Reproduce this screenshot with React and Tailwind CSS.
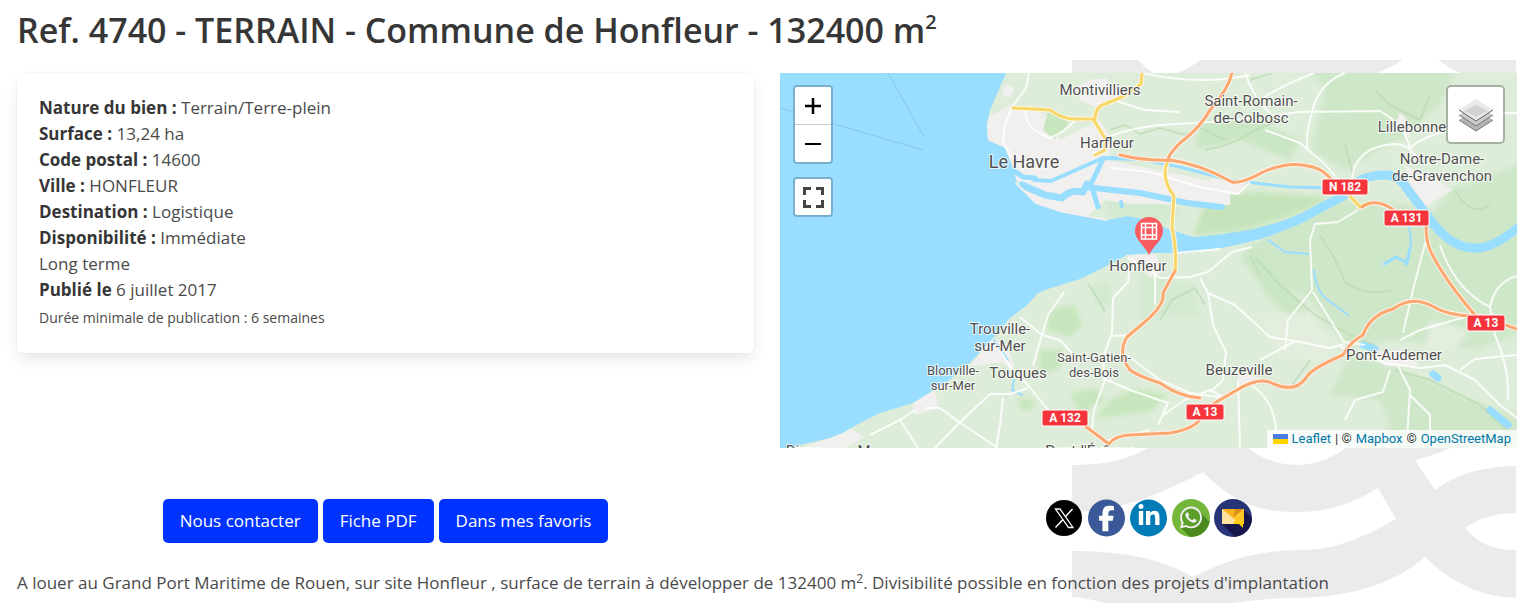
import { FaFacebookF, FaLinkedinIn, FaWhatsapp } from "react-icons/fa6";

const DETAILS = [
  ["Nature du bien :", "Terrain/Terre-plein"],
  ["Surface :", "13,24 ha"],
  ["Code postal :", "14600"],
  ["Ville :", "HONFLEUR"],
  ["Destination :", "Logistique"],
  ["Disponibilité :", "Immédiate"],
  ["", "Long terme"],
  ["Publié le", "6 juillet 2017"],
];

const WHITE_ROADS = [
  "M1029 73 L1026 88 L1012 107 L1005 125 L1003 142 L1012 158",
  "M1025 110 Q1026 130 1050 138 Q1068 130 1075 120",
  "M1105 138 Q1130 128 1160 125 L1210 122 L1255 118 L1300 112 L1380 111 Q1405 125 1410 148",
  "M1142 73 Q1200 86 1250 75",
  "M1113 100 L1145 110 L1180 112",
  "M1345 73 Q1322 82 1314 105 Q1302 145 1310 152 Q1330 165 1344 190",
  "M1314 73 Q1280 86 1260 100",
  "M1265 130 L1300 143 L1312 153",
  "M1245 73 Q1255 100 1270 113",
  "M1352 178 Q1356 147 1393 144 Q1410 144 1418 160",
  "M1410 148 Q1420 138 1450 130 M1500 113 L1517 113",
  "M1110 168 L1150 172 L1200 187 L1238 194 L1250 182",
  "M1358 210 L1338 222 L1315 224 L1310 240 L1312 290 L1288 320 L1285 350",
  "M1128 258 L1150 270 L1160 278 L1190 277 L1208 272 L1232 252 L1252 247",
  "M1175 253 L1220 249",
  "M1155 275 L1155 305",
  "M1200 278 L1208 293 L1235 305 L1270 337 L1295 341 L1330 348 L1345 344",
  "M1208 293 L1213 325 L1226 352 L1223 380 L1210 392",
  "M1130 263 L1128 282 L1113 298 L1112 333 L1103 358 L1105 380 L1094 410 L1092 428",
  "M1112 336 L1130 335",
  "M1020 317 L1042 335 L1060 340 L1072 353",
  "M1064 292 L1048 315 L1042 335 L1033 365",
  "M1120 350 L1160 380 L1190 393 L1225 398",
  "M1103 378 L1130 390 L1168 403 L1158 425",
  "M1163 415 L1185 400 L1210 390 L1225 398 L1240 388",
  "M1000 350 L1012 370 L1028 385 L1048 410",
  "M935 448 L958 424 L990 394 L1010 394 L1028 388",
  "M925 408 L940 408 L962 424 L998 448",
  "M1003 398 L1000 425 L996 448",
  "M1108 440 L1150 430",
  "M1238 380 L1240 448",
  "M1250 384 Q1278 402 1276 440",
  "M1260 360 L1295 341",
  "M1313 292 L1344 342 L1365 345",
  "M1340 347 L1385 363 L1420 368 L1445 365 L1475 380 L1500 405 L1517 418",
  "M1398 366 L1410 390 L1407 440 M1410 395 L1430 415 L1430 448",
  "M1390 370 L1383 392 L1355 400 L1345 420",
  "M1460 370 L1475 359 L1517 355",
  "M1400 340 L1420 330 L1465 317",
  "M1426 240 L1413 290 L1403 333",
  "M1440 245 Q1455 290 1490 307 L1495 335 Q1510 370 1508 400",
  "M1490 307 Q1495 282 1517 276",
  "M870 435 L900 420 L915 410 M900 420 L918 448",
];

const ORANGE_ROADS = [
  "M1232 73 Q1228 90 1210 110 Q1200 128 1180 143 Q1168 155 1168 160",
  "M1120 155 Q1145 161 1170 160 Q1200 164 1232 182 Q1242 184 1263 172 Q1290 160 1313 167 Q1322 169 1332 180",
  "M1362 207 Q1376 197 1395 211",
  "M1426 225 Q1426 244 1432 254 Q1445 280 1474 314",
  "M1175 271 L1163 293 Q1165 304 1147 320 L1127 337 Q1117 353 1130 370 Q1140 377 1160 383 Q1180 397 1200 398",
  "M1213 404 L1237 390 Q1260 376 1274 384 Q1295 393 1306 378 Q1310 369 1343 355 Q1350 342 1363 335 Q1370 315 1393 309 Q1412 295 1432 306 Q1450 317 1480 316 L1517 329",
  "M1085 426 L1109 444 Q1114 436 1130 435 L1170 433 Q1200 428 1203 413",
];

const YELLOW_ROADS = [
  "M1013 108 L1034 109 L1050 110 Q1062 119 1075 119 L1093 119 L1105 138 L1105 150 L1095 155",
  "M1142 73 L1141 84 L1122 97 L1105 104 Q1095 107 1095 119",
  "M1168 160 Q1160 178 1174 196 L1172 227 Q1177 250 1175 271",
  "M1350 196 L1360 207 L1370 203",
];

const PLACES = [
  { x: 1100, y: 95, size: 15, lines: ["Montivilliers"] },
  { x: 1107, y: 148, size: 15, lines: ["Harfleur"] },
  { x: 1024, y: 168, size: 18, lines: ["Le Havre"] },
  { x: 1251, y: 106, size: 15, lines: ["Saint-Romain-", "de-Colbosc"] },
  { x: 1412, y: 132, size: 15, lines: ["Lillebonne"] },
  { x: 1442, y: 164, size: 15, lines: ["Notre-Dame-", "de-Gravenchon"] },
  { x: 1138, y: 271, size: 15, lines: ["Honfleur"] },
  { x: 1000, y: 334, size: 15, lines: ["Trouville-", "sur-Mer"] },
  { x: 1018, y: 378, size: 15, lines: ["Touques"] },
  { x: 953, y: 375, size: 13, lines: ["Blonville-", "sur-Mer"] },
  { x: 1094, y: 362, size: 13, lines: ["Saint-Gatien-", "des-Bois"] },
  { x: 1239, y: 375, size: 15, lines: ["Beuzeville"] },
  { x: 1394, y: 360, size: 15, lines: ["Pont-Audemer"] },
  { x: 804, y: 456, size: 15, lines: ["Dives"] },
  { x: 864, y: 456, size: 15, lines: ["M"] },
  { x: 1090, y: 456, size: 15, lines: ["Pont-l'Évêque"] },
];

const SHIELDS = [
  { x: 1322, y: 179, w: 46, label: "N 182" },
  { x: 1384, y: 210, w: 45, label: "A 131" },
  { x: 1467, y: 315, w: 38, label: "A 13" },
  { x: 1186, y: 404, w: 38, label: "A 13" },
  { x: 1042, y: 410, w: 46, label: "A 132" },
];

function MapDrawing() {
  return (
    <svg
      className="block h-full w-full"
      viewBox="780 73 737 375"
      preserveAspectRatio="xMidYMid slice"
      role="img"
      aria-label="Carte de Honfleur"
    >
      <defs>
        <filter id="soft" x="-20%" y="-20%" width="140%" height="140%">
          <feGaussianBlur stdDeviation="2.5" />
        </filter>
        <clipPath id="land-clip">
          <path d="M1006 73 L990 110 L987 125 L988 140 L1005 148 L1012 165 L1017 183 L1035 203 L1060 211 L1087 217 L1107 220 L1127 216 L1145 219 L1163 227 L1193 237 L1215 236 L1260 230 L1300 214 L1330 200 L1330 208 L1300 222 L1260 241 L1220 248 L1187 253 L1153 253 L1127 255 L1103 268 L1080 279 L1044 291 L1027 305 L1010 318 L993 338 L970 363 L947 382 L913 403 L880 413 L860 423 L843 433 L830 438 L787 448 L1517 448 L1517 73 Z" />
        </clipPath>
      </defs>
      <rect x="780" y="73" width="737" height="375" fill="#99ddff" />
      <g fill="none" stroke="#86c6e9">
        <path d="M780 108 L923 150" />
        <path d="M888 73 L924 137" />
      </g>

      <path
        fill="#deedd9"
        d="M1006 73 L990 110 L987 125 L988 140 L1005 148 L1012 165 L1017 183 L1035 203 L1060 211 L1087 217 L1107 220 L1127 216 L1145 219 L1163 227 L1193 237 Q1260 232 1300 214 L1350 190 L1517 190 L1517 73 Z"
      />
      <path
        fill="#deedd9"
        d="M787 448 L830 438 L843 433 L860 423 L880 413 L913 403 L947 382 L970 363 L993 338 L1010 318 L1027 305 L1038 293 L1048 289 L1080 279 L1103 268 L1127 255 L1153 253 L1187 253 L1220 248 Q1270 240 1310 220 L1350 190 L1517 180 L1517 448 Z"
      />

      <g clipPath="url(#land-clip)">
        <g filter="url(#soft)">
          <path fill="#cfe7c9" d="M1265 235 L1340 200 L1420 205 L1470 240 L1530 225 L1530 330 L1475 350 L1400 340 L1345 345 L1310 300 L1275 280 L1240 262 L1250 244 Z" />
          <path fill="#cfe7c9" d="M1300 60 L1460 60 L1440 105 L1400 140 L1345 170 L1310 150 L1325 90 Z" />
          <path fill="#cfe7c9" d="M1432 215 L1450 190 L1530 160 L1530 225 L1470 245 Z" />
          <path fill="#cfe7c9" d="M1330 395 L1350 355 L1390 365 L1440 385 L1530 425 L1530 460 L1400 460 L1380 400 Z" />
          <path fill="#c6e4bb" d="M1208 196 L1260 192 L1330 197 L1300 213 L1250 229 L1193 236 Z" />
          <path fill="#d3ead0" d="M1105 200 L1150 198 L1185 210 L1165 225 L1110 218 Z" />
          <path fill="#c7e6bd" d="M1050 310 L1075 305 L1082 325 L1070 337 L1047 330 Z" />
          <path fill="#c7e6bd" d="M1110 400 L1135 388 L1168 395 L1150 412 L1095 418 Z" />
          <path fill="#c7e6bd" d="M1070 393 L1095 388 L1105 400 L1080 415 Z" />
          <path fill="#c7e6bd" d="M1040 350 L1062 350 L1060 368 L1040 375 Z" />
          <path fill="#c7e6bd" d="M1018 398 L1035 400 L1030 412 L1018 408 Z" />
          <path fill="#d3ead0" d="M1090 285 L1110 280 L1112 305 L1098 310 Z M1140 272 L1195 285 L1200 318 L1165 315 L1140 330 Z" />
          <path fill="#cbe6c5" d="M1200 122 L1250 118 L1300 140 L1290 160 L1240 140 L1195 150 Z" />
          <path fill="#cbe6c5" d="M1240 255 L1258 245 L1290 290 L1330 330 L1320 340 L1270 300 Z" />
          <path fill="#e3eede" d="M1260 320 L1310 310 L1335 340 L1330 365 L1280 355 Z M1430 320 L1470 330 L1455 350 L1425 350 Z" />
        </g>
        <path fill="#f2f0ee" d="M990 116 L1012 104 L1040 112 L1050 118 L1060 140 L1100 120 L1112 140 L1108 160 L1230 185 L1230 205 L1130 204 L1105 200 L1087 217 L1035 203 L1017 180 L1003 148 L987 140 L985 122 Z" />
        <path fill="#c7e6bd" d="M1048 112 L1062 113 L1068 125 L1054 139 L1043 130 Z" />
        <path fill="#f2f0ee" d="M1075 88 L1090 80 L1105 78 L1116 90 L1122 98 L1095 107 L1080 100 Z M1005 85 L1015 88 L1010 97 L1002 96 Z M1210 178 L1245 182 L1238 194 L1210 190 Z" />
        <path fill="#f2f0ee" d="M1405 166 L1434 178 L1452 190 L1425 207 L1410 184 Z M1400 113 Q1412 120 1410 138 L1395 125 Z" />
        <path fill="#f2f0ee" d="M1125 255 L1155 254 L1163 272 L1150 277 Z M993 338 L1007 345 L1015 370 L1000 362 L970 366 Z M913 403 L935 390 L938 408 L915 415 Z M800 448 L830 438 L850 428 L865 437 L845 448 Z" />
        <path fill="#f2f0ee" d="M1370 352 L1400 350 L1420 366 L1385 366 Z M1236 370 L1260 378 L1240 386 Z" />
      </g>

      <g fill="none" stroke="#b9d9b2" strokeOpacity="0.65" strokeWidth="2" strokeLinejoin="round">
        <path d="M1110 130 L1125 125 L1140 134 L1160 128 L1185 135 L1200 128 L1225 140" />
        <path d="M1205 150 Q1235 145 1255 130 L1285 118 M1250 80 L1272 73" />
        <path d="M1345 145 L1353 175 M1375 90 L1390 105 L1420 120 L1430 95" />
        <path d="M1255 257 L1280 285 L1315 315 L1350 335 L1375 345" />
        <path d="M1320 235 Q1338 262 1345 282 Q1365 297 1393 290" />
        <path d="M1160 320 L1172 300 L1195 288 L1205 305" />
        <path d="M1088 284 L1100 302 L1105 312 M1250 255 L1260 275" />
        <path d="M1290 388 L1310 360 M1395 370 L1430 380 L1480 405 L1517 440" />
        <path d="M1455 190 Q1470 218 1490 205" />
      </g>

      <g fill="none" stroke="#99ddff" strokeLinecap="round" strokeLinejoin="round">
        <path strokeWidth="9" d="M1190 246 Q1260 238 1300 219 L1345 195 Q1358 174 1387 175 Q1400 176 1408 190 L1427 215 Q1450 250 1478 248 Q1496 247 1522 224" />
        <path strokeWidth="4" d="M1034 180 L1051 181 L1103 158 L1140 159" />
        <path strokeWidth="3" d="M1138 159 L1180 167 L1230 180 L1290 187 L1340 188" />
        <path strokeWidth="6" d="M1085 187 L1140 193 L1187 203 L1222 207" />
        <path strokeWidth="5" d="M1103 159 L1091 184 L1098 207" />
        <path strokeWidth="7" d="M1022 185 L1045 195 L1062 198 Q1070 189 1083 192 L1087 184" />
        <path strokeWidth="5" d="M1010 168 L1023 177 L1035 178" />
        <path strokeWidth="4" d="M1121 202 L1122 206" />
        <path strokeWidth="2" d="M1268 240 L1285 252 L1310 254 M1314 270 Q1315 288 1325 298 L1348 315 M1408 225 Q1415 245 1405 265" />
        <path strokeWidth="3" d="M1384 264 L1396 257 L1407 263 L1410 248" />
        <path strokeWidth="7" d="M1363 345 L1375 349 M1433 374 L1438 378 M1490 410 L1508 425" />
        <path strokeWidth="2" d="M994 340 L1008 360 M1014 380 L1012 390 L1022 395" />
      </g>
      <path fill="none" stroke="#f2f0ee" strokeWidth="2" d="M1016 183 L1036 203 L1060 211 L1107 220" />

      <path fill="none" stroke="#fff" strokeWidth="2" strokeLinejoin="round" strokeOpacity="0.85" d={WHITE_ROADS.join(" ")} />
      <g fill="none" strokeLinecap="round" strokeLinejoin="round">
        <path stroke="#fdf6e4" strokeWidth="5" d={YELLOW_ROADS.join(" ")} />
        <path stroke="#fdf3ea" strokeWidth="5" d={ORANGE_ROADS.join(" ")} />
        <path stroke="#f6d768" strokeWidth="3" d={YELLOW_ROADS.join(" ")} />
        <path stroke="#fba770" strokeWidth="3" d={ORANGE_ROADS.join(" ")} />
      </g>

      <g
        fill="#50504f"
        stroke="#fff"
        strokeOpacity="0.8"
        strokeWidth="2"
        paintOrder="stroke"
        textAnchor="middle"
        className="font-['Roboto','Liberation_Sans',sans-serif]"
      >
        {PLACES.map((place) =>
          place.lines.map((line, i) => (
            <text key={line + place.y} x={place.x} y={place.y + i * (place.size + 2)} fontSize={place.size}>
              {line}
            </text>
          )),
        )}
      </g>

      {SHIELDS.map((s) => (
        <g key={s.label + s.x}>
          <rect x={s.x} y={s.y} width={s.w} height="16" rx="2" fill="#f5343b" stroke="#fff" strokeWidth="1" />
          <text
            x={s.x + s.w / 2}
            y={s.y + 12}
            fontSize="12"
            fontWeight="700"
            fill="#fff"
            textAnchor="middle"
            className="font-['Roboto','Liberation_Sans',sans-serif]"
          >
            {s.label}
          </text>
        </g>
      ))}

      <path fill="#fb5c60" d="M1149 255 C1145 246 1135 240 1135 231 A14 14 0 0 1 1163 231 C1163 240 1153 246 1149 255 Z" />
      <path
        fill="none"
        stroke="#fff"
        strokeWidth="1.5"
        d="M1141.500 223.500 H1156.500 V239 H1141.500 Z M1145.500 223 V239 M1152.500 223 V239 M1141 227.500 H1157 M1141 235 H1157"
      />
    </svg>
  );
}

function Waves() {
  return (
    <svg
      className="pointer-events-none absolute top-[60px] right-2 -z-10 h-[543px] w-[444px]"
      viewBox="1072 60 444 543"
      aria-hidden="true"
    >
      <rect x="1072" y="60" width="444" height="543" fill="#ebebeb" />
      <g fill="#fff">
        <path d="M1138 60 Q1145 68 1153 73 H1177 Q1190 68 1200 60 Z" />
        <path d="M1403 60 Q1392 67 1377 73 H1460 Q1448 67 1438 60 Z" />
        <path d="M1072 440 V465 C1104 465 1128 460 1152 446 V440 Z" />
        <path d="M1246 446 Q1268 465 1297 465 Q1326 464 1348 446 Z" />
        <path d="M1415 460 Q1436 455 1455 446 H1516 V466 C1484 466 1456 474 1435 490 Z" />
        <path d="M1072 512 C1124 511 1164 492 1203 472 C1234 504 1262 512 1297 512 C1330 512 1355 502 1378 488 L1396 519 C1344 548 1324 550 1297 550 C1250 551 1218 564 1193 577 C1160 557 1116 551 1072 551 Z" />
        <path d="M1465 528 Q1486 513 1516 513 V550 Q1482 550 1465 528 Z" />
        <path d="M1425 557 C1394 584 1350 597 1297 598 Q1262 598 1233 603 H1516 V598 C1476 596 1450 581 1425 557 Z" />
        <path d="M1072 597 Q1088 598 1104 603 H1072 Z" />
      </g>
    </svg>
  );
}

function LayersIcon() {
  return (
    <svg className="size-9" viewBox="0 0 36 36" aria-hidden="true">
      <path d="M1 23 L18 14 L35 23 L18 34 Z" fill="#b4b4b4" />
      <path d="M1 23 L18 34 L35 23" fill="none" stroke="#777" />
      <path d="M1 18 L18 8 L35 18 L18 29 Z" fill="#c9c9c9" />
      <path d="M1 18 L18 29 L35 18" fill="none" stroke="#777" />
      <path d="M1 13 L18 2 L35 13 L18 24 Z" fill="#e9e9e9" />
      <path d="M6 14 L18 8 L30 14 L18 20 Z" fill="#d2d2d2" />
      <path d="M1 13 L18 24 L35 13" fill="none" stroke="#666" />
    </svg>
  );
}

function ShareIcon({ label, children }) {
  return (
    <a href="#" aria-label={label} className="block size-[38px]">
      <svg className="size-full" viewBox="0 0 38 38" aria-hidden="true">
        {children}
      </svg>
    </a>
  );
}

const buttonClass =
  "h-11 rounded-[5px] bg-[#0033ff] px-[17px] text-[17px] text-white hover:bg-[#002be0]";
const mapButton = "flex w-9 cursor-pointer items-center justify-center bg-white";
const mapLink = "text-[#0078a8] hover:underline";

export default function App() {
  return (
    <main className="relative isolate overflow-hidden pr-[7px] pb-2 pl-[17px] font-['Open_Sans','Noto_Sans',sans-serif] text-[17px] leading-[26px] text-[#4a4a4a]">
      <Waves />
      <h1 className="pt-2 pb-[21px] text-[34px] leading-[44px] font-semibold text-[#363636]">
        Ref. 4740 - TERRAIN - Commune de Honfleur - 132400 m<sup className="top-[-0.7em] text-[20px]">2</sup>
      </h1>

      <div className="grid grid-cols-2 items-start gap-[26px]">
        <section className="rounded-md bg-white px-[22px] py-[22px] shadow-[0_8px_16px_-2px_rgba(10,10,10,0.1),0_0_0_1px_rgba(10,10,10,0.02)]">
          {DETAILS.map(([label, value]) => (
            <p key={label + value}>
              {label && <strong className="font-bold text-[#363636]">{label} </strong>}
              {value}
            </p>
          ))}
          <p className="pt-px">
            <small className="text-[14px]">Durée minimale de publication : 6 semaines</small>
          </p>
        </section>

        <section className="relative h-[375px] overflow-hidden">
          <MapDrawing />
          <div className="absolute top-3 left-[13px] flex flex-col gap-[13px]">
            <div className="flex flex-col overflow-hidden rounded-[4px] border-2 border-black/20 bg-clip-padding">
              <button type="button" aria-label="Zoom avant" className={mapButton + " h-[38px] border-b border-[#ccc]"}>
                <svg className="size-4" viewBox="0 0 16 16" aria-hidden="true">
                  <path d="M0 8 H16 M8 0 V16" stroke="#000" strokeWidth="2.5" />
                </svg>
              </button>
              <button type="button" aria-label="Zoom arrière" className={mapButton + " h-[37px]"}>
                <svg className="size-4" viewBox="0 0 16 16" aria-hidden="true">
                  <path d="M0 8 H16" stroke="#000" strokeWidth="2" />
                </svg>
              </button>
            </div>
            <div className="overflow-hidden rounded-[4px] border-2 border-black/20 bg-clip-padding">
              <button type="button" aria-label="Plein écran" className={mapButton + " h-9"}>
                <svg className="size-[21px]" viewBox="0 0 21 21" aria-hidden="true">
                  <path
                    d="M1.500 8 V1.500 H8 M13 1.500 H19.500 V8 M19.500 13 V19.500 H13 M8 19.500 H1.500 V13"
                    fill="none"
                    stroke="#444"
                    strokeWidth="3"
                  />
                </svg>
              </button>
            </div>
          </div>
          <button
            type="button"
            aria-label="Couches"
            className="absolute top-3 right-3 flex size-[59px] items-center justify-center rounded-[5px] border-2 border-black/25 bg-white bg-clip-padding"
          >
            <LayersIcon />
          </button>
          <div className="absolute right-0 bottom-0 flex h-[18px] items-center gap-1 bg-white/80 px-[6px] font-['Roboto','Liberation_Sans',sans-serif] text-[13px] leading-[18px] whitespace-nowrap text-[#333]">
            <a href="#" className={mapLink + " flex items-center gap-1"}>
              <svg className="h-[10px] w-[15px]" viewBox="0 0 15 10" aria-hidden="true">
                <rect width="15" height="5" fill="#4c7be1" />
                <rect y="5" width="15" height="5" fill="#ffd500" />
              </svg>
              Leaflet
            </a>
            <span>| ©</span>
            <a href="#" className={mapLink}>Mapbox</a>
            <span>©</span>
            <a href="#" className={mapLink}>OpenStreetMap</a>
          </div>
        </section>
      </div>

      <div className="grid grid-cols-2 items-start gap-[26px] pt-[51px]">
        <div className="flex justify-center gap-[5px]">
          <button type="button" className={buttonClass}>Nous contacter</button>
          <button type="button" className={buttonClass}>Fiche PDF</button>
          <button type="button" className={buttonClass}>Dans mes favoris</button>
        </div>
        <div className="flex justify-center gap-1">
          <ShareIcon label="X">
            <circle cx="18" cy="19" r="18" fill="#000" />
            <g fill="none" stroke="#fff">
              <path strokeWidth="1.300" d="M9.500 10 H14 L27 28.500 H22.500 Z" />
              <path strokeWidth="1.500" d="M26.500 10 L19.300 17.800 M17 20.500 L9.500 28.500" />
            </g>
          </ShareIcon>
          <ShareIcon label="Facebook">
            <circle cx="18.500" cy="19" r="18.500" fill="#3b5998" />
            <FaFacebookF x="5.500" y="6.500" size={26} color="#fff" />
          </ShareIcon>
          <ShareIcon label="LinkedIn">
            <circle cx="18.500" cy="19" r="18.500" fill="#007bb5" />
            <FaLinkedinIn x="7" y="5" size={24} color="#fff" />
          </ShareIcon>
          <ShareIcon label="WhatsApp">
            <defs>
              <clipPath id="wa-clip">
                <circle cx="19" cy="19" r="19" />
              </clipPath>
            </defs>
            <circle cx="19" cy="19" r="19" fill="#75b73b" />
            <path clipPath="url(#wa-clip)" fill="#4b8a1e" d="M26 11 L42 27 V42 H22 L9 29 Z" />
            <circle cx="19" cy="18.500" r="9" fill="#5c9f2b" />
            <FaWhatsapp x="6.500" y="6" size={25} color="#f2f2f2" />
          </ShareIcon>
          <ShareIcon label="E-mail">
            <defs>
              <clipPath id="mail-clip">
                <circle cx="19" cy="19" r="19" />
              </clipPath>
            </defs>
            <circle cx="19" cy="19" r="19" fill="#273477" />
            <path clipPath="url(#mail-clip)" fill="#17164a" d="M30 11 L42 23 V42 H25 L8 25 Z" />
            <rect x="8" y="10" width="22" height="15" fill="#ffe2a0" />
            <path d="M8 10 H30 L19 19 Z" fill="#fbb31c" />
            <path d="M21 10 H30 L19 19 Z" fill="#d99016" />
            <path d="M30 10 V25 H25 L19 19 Z" fill="#ffc629" />
            <path d="M20 22 H29 V29 L25 25 H20 Z" fill="#ffcb05" />
          </ShareIcon>
        </div>
      </div>

      <p className="pt-[27px]">
        A louer au Grand Port Maritime de Rouen, sur site Honfleur , surface de terrain à développer de 132400 m
        <sup className="text-[12px]">2</sup>. Divisibilité possible en fonction des projets d'implantation
      </p>
    </main>
  );
}
